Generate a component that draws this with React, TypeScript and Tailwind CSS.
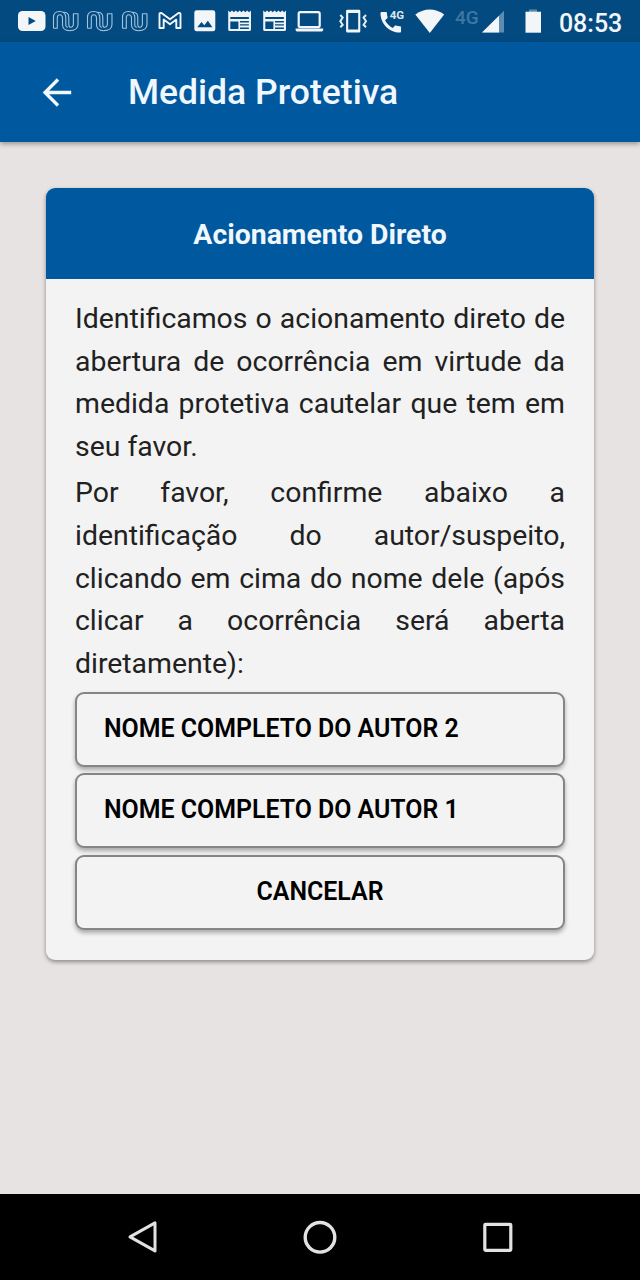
import type { ReactNode } from 'react';

const authors = ['Nome completo do autor 2', 'Nome completo do autor 1'];

function StatusIcon({ width = 34.7, children }: { width?: number; children: ReactNode }) {
  return (
    <svg className="shrink-0" width={width} height={42} viewBox={`0 0 ${width} 42`} fill="none">
      {children}
    </svg>
  );
}

function YoutubeIcon() {
  return (
    <StatusIcon>
      <rect x="4" y="11" width="27.5" height="20" rx="4.5" fill="#f3f6f9" />
      <path d="M14.5 17v8l7.3-4z" fill="#034a80" />
    </StatusIcon>
  );
}

function NuIcon() {
  return (
    <StatusIcon>
      <g stroke="#a3c4dd" strokeWidth="1.1" strokeLinejoin="round">
        {/* n */}
        <path d="M4.5 28.3V17.5Q4.5 11.5 10.5 11.5T16.8 17.5V25.5Q17 27.3 19 27.3" />
        <path d="M4.5 28.3H8.3V17.8Q8.3 14.8 10.8 14.8T13.5 17.8V24.5Q13.5 30.6 20.5 30.6" />
        {/* u */}
        <path d="M14 12.3Q19.8 12 19.8 17.5V24.5Q19.8 27.3 21.8 27.3T24.4 24.5V13.8H29V24.5Q29 30.6 20.5 30.6" />
      </g>
    </StatusIcon>
  );
}

function MailIcon() {
  return (
    <StatusIcon>
      <path
        d="M6.5 28V14.1Q6.5 12.7 8.5 12.9L17 19.3L25.5 12.9Q27.5 12.7 27.5 14.1V28H23.3V19.6L17 24.2L10.7 19.6V28Z"
        stroke="#f3f6f9"
        strokeWidth="1.9"
        strokeLinejoin="round"
      />
    </StatusIcon>
  );
}

function ImageIcon() {
  return (
    <StatusIcon>
      <rect x="7.3" y="10.3" width="21" height="21" rx="2.4" fill="#f3f6f9" />
      <path d="M10.3 27.3l4.2-5.3 2.8 3.3 3.6-4.5 4.5 6.5z" fill="#034a80" />
    </StatusIcon>
  );
}

function NewsIcon() {
  return (
    <StatusIcon>
      <path
        d="M6.2 10.5l1.9 1.8L10 10.5l1.9 1.8 1.9-1.8 1.9 1.8 1.9-1.8 1.9 1.8 1.9-1.8 1.9 1.8 1.9-1.8 1.9 1.8L29 10.5v18.9q0 1.6-1.6 1.6H7.8q-1.6 0-1.6-1.6z"
        fill="#eef3f8"
      />
      <path d="M8.3 16.9H26.9V19H8.3zM8.3 21.5H16.4V29H8.3z" fill="#034a80" />
      <path d="M18 21.8H26.9M18 24.9H26.9M18 28.2H26.9" stroke="#034a80" strokeWidth="1.4" />
    </StatusIcon>
  );
}

function LaptopIcon() {
  return (
    <StatusIcon>
      <rect x="6.7" y="12.1" width="21" height="15" rx="1.6" stroke="#f3f6f9" strokeWidth="2.2" />
      <path d="M3.6 28.6H31.2V30q0 1.4-1.4 1.4H5q-1.4 0-1.4-1.4z" fill="#f3f6f9" />
    </StatusIcon>
  );
}

function VibrateIcon() {
  return (
    <StatusIcon width={30}>
      <path
        d="M9.3 9.8h11.8q1.2 0 1.2 1.2v20.3q0 1.2-1.2 1.2H9.3q-1.2 0-1.2-1.2V11q0-1.2 1.2-1.2zM10.2 13v16.5h10V13z"
        fill="#f3f6f9"
        fillRule="evenodd"
      />
      <path
        d="M2.3 15l2.4 2.5-2.4 3.7 2.4 3.6-2.4 2.5M28 15l-2.4 2.5 2.4 3.7-2.4 3.6 2.4 2.5"
        stroke="#e6eef5"
        strokeWidth="2"
      />
    </StatusIcon>
  );
}

function CallIcon() {
  return (
    <StatusIcon width={30}>
      <path
        transform="translate(1.1 8.6) scale(1.14)"
        d="M20.01 15.38c-1.23 0-2.42-.2-3.53-.56-.35-.12-.74-.03-1.01.24l-1.57 1.97c-2.83-1.35-5.48-3.9-6.89-6.83l1.95-1.66c.27-.28.35-.67.24-1.02-.37-1.11-.56-2.3-.56-3.53 0-.54-.45-.99-.99-.99H4.19C3.65 3 3 3.24 3 3.99 3 13.28 10.73 21 20.01 21c.71 0 .99-.63.99-1.18v-3.45c0-.54-.45-.99-.99-.99z"
        fill="#f3f6f9"
      />
      <text x="13.7" y="18.8" fontFamily="Roboto, sans-serif" fontSize="11.5" fontWeight="700" fill="#dce8f2">
        4G
      </text>
    </StatusIcon>
  );
}

function StatusBar() {
  return (
    <div className="flex h-[42px] items-center bg-[#034a80] pl-3.5 text-[#f3f6f9]">
      <YoutubeIcon />
      <NuIcon />
      <NuIcon />
      <NuIcon />
      <MailIcon />
      <ImageIcon />
      <NewsIcon />
      <NewsIcon />
      <LaptopIcon />
      <div className="ml-3 flex items-center">
        <VibrateIcon />
        <div className="ml-2">
          <CallIcon />
        </div>
        <div className="ml-2">
          <StatusIcon width={32}>
            <path d="M1.3 14.5Q15.8 4.5 30.2 14.5L15.8 33z" fill="#f3f6f9" />
          </StatusIcon>
        </div>
        <span className="ml-[8.7px] w-[27px] pb-[7px] text-[19px] leading-none font-medium text-[#3f77a3]">4G</span>
        <StatusIcon width={24}>
          <path d="M22 10.8V32.5H0z" fill="#5c8cb2" />
          <path d="M17 15.8V32.5H0z" fill="#f3f6f9" />
        </StatusIcon>
        <div className="ml-[19px]">
          <StatusIcon width={20}>
            <path d="M4 9.5h8V12H4z" fill="#5c8cb2" />
            <path d="M.5 11.7H16v21H.5z" fill="#f3f6f9" />
          </StatusIcon>
        </div>
        <span className="ml-3.5 pt-1 text-[25px] leading-none font-medium">08:53</span>
      </div>
    </div>
  );
}

function AppBar() {
  return (
    <header className="flex h-[100px] items-center bg-[#00599f] pl-[42px] text-[#f0f7ff] shadow-[0_2px_5px_rgba(0,0,0,0.35)]">
      <svg width="30" height="30" viewBox="0 0 30 30" fill="none">
        <path d="M29.2 15.5H3M16 2.5L3 15.5L16 28.5" stroke="currentColor" strokeWidth="3.3" />
      </svg>
      <h1 className="ml-14 pt-0.5 text-[35.5px] leading-none font-medium">Medida Protetiva</h1>
    </header>
  );
}

function ActionButton({ align = 'left', children }: { align?: 'left' | 'center'; children: ReactNode }) {
  return (
    <button
      className={`h-[75px] w-full rounded-[9px] border-2 border-[#858585] bg-[#f3f3f3] px-[27px] text-[24.9px] leading-none font-semibold text-black uppercase shadow-[0_3px_4px_rgba(0,0,0,0.3)] ${
        align === 'center' ? 'text-center' : 'text-left'
      }`}
    >
      {children}
    </button>
  );
}

function NavigationBar() {
  return (
    <nav className="flex h-[86px] items-center justify-between bg-black px-[124px] text-[#e2e2e2]">
      <svg width="36" height="36" viewBox="0 0 36 36" fill="none" stroke="currentColor" strokeWidth="3">
        <path d="M31 3.9V31.9L6 17.9z" strokeLinejoin="round" />
      </svg>
      <svg width="36" height="36" viewBox="0 0 36 36" fill="none" stroke="currentColor" strokeWidth="3.4">
        <circle cx="18" cy="18.3" r="14.8" />
      </svg>
      <svg width="36" height="36" viewBox="0 0 36 36" fill="none" stroke="currentColor" strokeWidth="3.2">
        <rect x="4.8" y="5.3" width="26" height="26" rx="0.8" />
      </svg>
    </nav>
  );
}

export default function App() {
  return (
    <div className="flex h-[1280px] w-[640px] flex-col overflow-hidden bg-[#e7e3e2] font-['Roboto',sans-serif]">
      <StatusBar />
      <AppBar />

      <main className="flex-1 px-[46px] pt-[46.4px]">
        <section className="h-[772px] overflow-hidden rounded-[9px] bg-[#f3f3f3] shadow-[0_2px_4px_rgba(0,0,0,0.4)]">
          <h2 className="flex h-[90.5px] items-center justify-center bg-[#00599f] pt-[3px] text-[28.4px] leading-none font-bold text-[#f0f7ff]">
            Acionamento Direto
          </h2>

          <div className="px-[29px] pt-[19.1px] text-[28.4px] leading-[42.67px] text-[#212121]">
            <p className="text-justify">
              Identificamos o acionamento direto de abertura de ocorrência em virtude da medida protetiva cautelar que
              tem em seu favor.
            </p>
            <p className="mt-[3.5px] text-justify">
              Por favor, confirme abaixo a identificação do autor/suspeito, clicando em cima do nome dele (após clicar
              a ocorrência será aberta diretamente):
            </p>

            {/* Suspect choices */}
            <div className="mt-1.5 flex flex-col gap-[6.8px]">
              {authors.map((author) => (
                <ActionButton key={author}>{author}</ActionButton>
              ))}
              <ActionButton align="center">Cancelar</ActionButton>
            </div>
          </div>
        </section>
      </main>

      <NavigationBar />
    </div>
  );
}
